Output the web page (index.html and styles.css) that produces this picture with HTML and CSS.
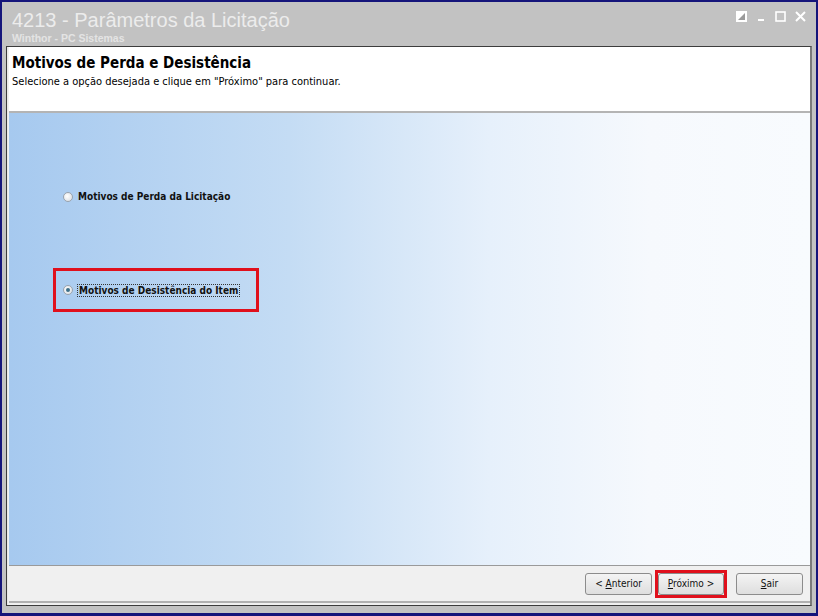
FILE: index.html
```html
<!DOCTYPE html>
<html lang="pt-BR">
<head>
    <meta charset="UTF-8">
    <title>4213 - Parâmetros da Licitação</title>
    <link rel="stylesheet" href="styles.css">
</head>
<body>
    <div class="window">
        <div class="titlebar">
            <div class="title-text">
                <div class="title">4213 - Parâmetros da Licitação</div>
                <div class="subtitle">Winthor - PC Sistemas</div>
            </div>
            <div class="controls">
                <svg width="11" height="11" viewBox="0 0 11 11"><rect x="0" y="0" width="11" height="11" fill="#fff"/><path d="M2 9 L9 2 L9 9 Z" fill="#9a9a9a"/></svg>
                <svg width="10" height="11" viewBox="0 0 10 11"><rect x="2" y="8" width="6" height="2" fill="#fff"/></svg>
                <svg width="11" height="11" viewBox="0 0 11 11"><rect x="1" y="1" width="9" height="9" fill="none" stroke="#fff" stroke-width="1.6"/></svg>
                <svg width="11" height="11" viewBox="0 0 11 11"><path d="M1 1 L10 10 M10 1 L1 10" stroke="#fff" stroke-width="2"/></svg>
            </div>
        </div>
        <div class="client">
            <div class="header">
                <h1>Motivos de Perda e Desistência</h1>
                <p>Selecione a opção desejada e clique em "Próximo" para continuar.</p>
            </div>
            <div class="content">
                <label class="option first">
                    <span class="radio"></span>
                    <span class="label">Motivos de Perda da Licitação</span>
                </label>
                <div class="highlight">
                    <label class="option">
                        <span class="radio checked"></span>
                        <span class="label focused">Motivos de Desistência do Item</span>
                    </label>
                </div>
            </div>
            <div class="footer">
                <button class="btn"><span>&lt; <u>A</u>nterior</span></button>
                <div class="btn-mark">
                    <button class="btn"><span><u>P</u>róximo &gt;</span></button>
                </div>
                <button class="btn exit"><span><u>S</u>air</span></button>
            </div>
        </div>
    </div>
</body>
</html>
```

FILE: styles.css
```css
body {
    margin: 0;
    padding: 0;
    background-color: #14147a;
    font-family: "DejaVu Sans", sans-serif;
}

.window {
    width: 818px;
    height: 616px;
    box-sizing: border-box;
    border: 2px solid #14147a;
    border-bottom-width: 3px;
    background-color: #c2c2c2;
    display: flex;
    flex-direction: column;
}

.titlebar {
    height: 44px;
    display: flex;
    justify-content: space-between;
    padding: 0 10px 0 10px;
    flex-shrink: 0;
}

.title {
    font-family: "Liberation Sans", Arial, sans-serif;
    font-size: 20px;
    color: #ececec;
    margin-top: 8px;
    line-height: 21px;
}

.subtitle {
    font-family: "Liberation Sans", Arial, sans-serif;
    font-weight: bold;
    font-size: 10.5px;
    color: #e4e4e4;
    margin-top: 1px;
}

.controls {
    display: flex;
    align-items: flex-start;
    gap: 9px;
    margin-top: 9px;
}

.client {
    flex: 1;
    margin: 0 4px 7px 4px;
    border: 1px solid #3c3c3c;
    border-right: 2px solid #7a7a7a;
    display: flex;
    flex-direction: column;
    background-color: #f0f0f0;
    padding: 0 0 2px 2px;
    box-shadow: inset 1px 0 0 #e8e8e8;
}

.header {
    background-color: #fff;
    height: 66px;
    border-bottom: 2px solid #b4b4b4;
    padding: 6px 0 0 3px;
    box-sizing: border-box;
}

.header h1 {
    margin: 0;
    font-family: "DejaVu Sans", sans-serif;
    font-stretch: condensed;
    font-size: 15px;
    font-weight: bold;
    color: #000;
    line-height: 20px;
}

.header p {
    margin: 2px 0 0 0;
    font-size: 11px;
    font-stretch: condensed;
    color: #000;
}

.content {
    flex: 1;
    background: linear-gradient(to right, #a6c9ef 0%, #c4dcf4 35%, #e6f0fb 60%, #f6f9fd 80%, #f8fbfe 100%);
    padding-left: 44px;
}

.option {
    display: flex;
    align-items: center;
    gap: 5px;
    font-size: 10px;
    font-stretch: condensed;
    font-weight: bold;
    color: #111;
}

.option.first {
    margin: 78px 0 0 10px;
}

.radio {
    width: 8px;
    height: 8px;
    border-radius: 50%;
    border: 1px solid #9aa3ad;
    background: radial-gradient(circle at 40% 40%, #ffffff, #d4d9df);
    position: relative;
}

.radio.checked::after {
    content: "";
    position: absolute;
    left: 2px;
    top: 2px;
    width: 4px;
    height: 4px;
    border-radius: 50%;
    background: #3b6f8a;
}

.label.focused {
    outline: 1px dotted #333;
    padding: 0 1px;
}

.highlight {
    width: 200px;
    height: 38px;
    margin-top: 66px;
    border: 3px solid #e0101c;
    box-sizing: content-box;
    display: flex;
    align-items: center;
}

.highlight .option {
    margin-left: 7px;
}

.footer {
    height: 38px;
    border-top: 1px solid #9a9a9a;
    display: flex;
    align-items: center;
    justify-content: flex-end;
    padding-right: 7px;
    gap: 3px;
    box-sizing: border-box;
    border-bottom: 2px solid #b0b0b0;
}

.btn {
    width: 67px;
    height: 22px;
    font-family: "DejaVu Sans", sans-serif;
    font-stretch: condensed;
    font-size: 10px;
    color: #111;
    background: linear-gradient(#f4f4f4, #dedede);
    border: 1px solid #8c8c8c;
    border-radius: 3px;
    padding: 0;
}

.btn-mark {
    border: 3px solid #e0101c;
    padding: 0;
    display: flex;
}

.btn-mark .btn {
    width: 66px;
}

.btn.exit {
    width: 67px;
    margin-left: 6px;
}
```
